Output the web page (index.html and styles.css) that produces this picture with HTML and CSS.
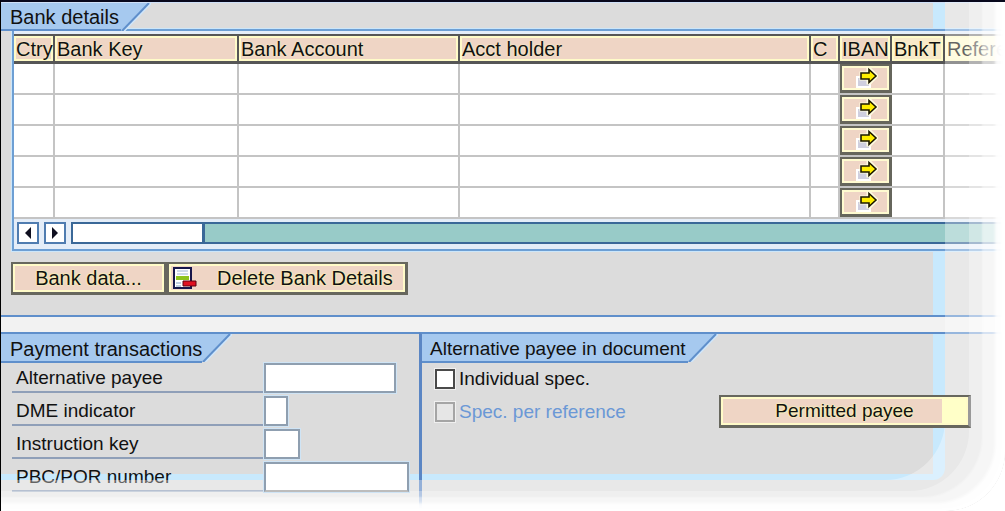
FILE: index.html
```html
<!DOCTYPE html>
<html lang="en">
<head>
<meta charset="utf-8">
<title>Bank details</title>
<link rel="stylesheet" href="styles.css">
</head>
<body>
<svg class="defs" width="0" height="0" aria-hidden="true">
  <symbol id="arrow" viewBox="0 0 24 22">
    <path d="M2 9h15v12H2z" fill="#fff"/>
    <path d="M4 11h11v8H4z" fill="#cfcfdf"/>
    <path d="M7 6h7V2h2l7 7-7 7h-2v-4H7z" fill="#ffffd0" stroke="#fffde0" stroke-width="3"/>
    <path d="M7 6h8V2.500l7 6.500-7 6.500V12H7z" fill="#ffee00" stroke="#1c1800" stroke-width="1.600"/>
  </symbol>
</svg>
<main class="page">
  <section class="panel bank">
    <h2 class="tab"><svg class="tab-edge" viewBox="0 0 30 28" aria-hidden="true"><path class="tab-fill" d="M0 0h28L1 28H0z"/><path class="tab-light" d="M30 0L3 28"/><path class="tab-line" d="M28 0L1 28"/></svg>Bank details</h2>
    <div class="frame">
      <table class="grid">
        <colgroup><col class="w-ctry"><col class="w-key"><col class="w-acct"><col><col class="w-c"><col class="w-iban"><col class="w-bnkt"><col class="w-ref"></colgroup>
        <thead><tr><th>Ctry</th><th>Bank Key</th><th>Bank Account</th><th>Acct holder</th><th>C</th><th>IBAN</th><th class="pale">BnkT</th><th class="pale">Refere</th></tr></thead>
        <tbody>
          <tr><td></td><td></td><td></td><td></td><td></td><td><button class="iban" aria-label="IBAN row 1"><svg><use href="#arrow"/></svg></button></td><td></td><td></td></tr>
          <tr><td></td><td></td><td></td><td></td><td></td><td><button class="iban" aria-label="IBAN row 2"><svg><use href="#arrow"/></svg></button></td><td></td><td></td></tr>
          <tr><td></td><td></td><td></td><td></td><td></td><td><button class="iban" aria-label="IBAN row 3"><svg><use href="#arrow"/></svg></button></td><td></td><td></td></tr>
          <tr><td></td><td></td><td></td><td></td><td></td><td><button class="iban" aria-label="IBAN row 4"><svg><use href="#arrow"/></svg></button></td><td></td><td></td></tr>
          <tr><td></td><td></td><td></td><td></td><td></td><td><button class="iban" aria-label="IBAN row 5"><svg><use href="#arrow"/></svg></button></td><td></td><td></td></tr>
        </tbody>
      </table>
      <div class="scroll">
        <button class="step" aria-label="Scroll left"><svg viewBox="0 0 8 12"><path d="M7 0v12L1 6z"/></svg></button>
        <button class="step" aria-label="Scroll right"><svg viewBox="0 0 8 12"><path d="M1 0v12l6-6z"/></svg></button>
        <div class="track"><div class="thumb"></div></div>
      </div>
    </div>
    <div class="actions">
      <button class="btn data">Bank data...</button>
      <button class="btn delete"><svg viewBox="0 0 26 24" aria-hidden="true"><path d="M2 2h17v20H2z" fill="#fff" stroke="#16164a" stroke-width="2"/><path d="M5 5h11M5 8h11" stroke="#9fb4d4" stroke-width="1"/><path d="M4 10h13v4H4z" fill="#8fc31e"/><path d="M4 17h5M4 20h5" stroke="#7f9ac4" stroke-width="1"/><path d="M11 15h13v5H11z" fill="#e01020" stroke="#5a0010" stroke-width="1"/></svg><span>Delete Bank Details</span></button>
    </div>
  </section>
  <div class="lower">
    <section class="panel payment">
      <h2 class="tab"><svg class="tab-edge" viewBox="0 0 30 28" aria-hidden="true"><path class="tab-fill" d="M0 0h28L1 28H0z"/><path class="tab-light" d="M30 0L3 28"/><path class="tab-line" d="M28 0L1 28"/></svg>Payment transactions</h2>
      <div class="fields">
        <div class="field"><label for="payee">Alternative payee</label><input id="payee" class="in-payee"></div>
        <div class="field"><label for="dme">DME indicator</label><input id="dme" class="in-dme"></div>
        <div class="field"><label for="key">Instruction key</label><input id="key" class="in-key"></div>
        <div class="field last"><label for="pbc">PBC/POR number</label><input id="pbc" class="in-pbc"></div>
      </div>
    </section>
    <section class="panel payee">
      <h2 class="tab"><svg class="tab-edge" viewBox="0 0 30 28" aria-hidden="true"><path class="tab-fill" d="M0 0h28L1 28H0z"/><path class="tab-light" d="M30 0L3 28"/><path class="tab-line" d="M28 0L1 28"/></svg>Alternative payee in document</h2>
      <div class="choices">
        <label class="check"><input type="checkbox">Individual spec.</label>
        <div class="choice-row">
          <label class="check off"><input type="checkbox" disabled>Spec. per reference</label>
          <button class="btn permitted">Permitted payee</button>
        </div>
      </div>
    </section>
  </div>
</main>
</body>
</html>
```
FILE: styles.css
```css
* { box-sizing: border-box; }

body {
  margin: 0;
  background: #fff;
  color: #111;
  font-family: "Liberation Sans", Arial, sans-serif;
  font-size: 20px;
  line-height: 24px;
}

button, input { font: inherit; color: inherit; margin: 0; padding: 0; border-radius: 0; }
.defs { position: absolute; }

.page {
  position: relative;
  isolation: isolate;
  min-height: 100vh;
  overflow: hidden;
  display: flex;
  flex-direction: column;
  background: #dcdcdc;
  border-top: 2px solid #08081c;
  border-left: 1px solid #000;
  border-bottom-right-radius: 60px;
}

/* pale blue rim behind the panels */
.page::before {
  content: "";
  position: absolute;
  z-index: -1;
  inset: 0 60px 31px 0;
  border-right: 12px solid #c8e9fd;
  border-bottom: 6px solid #c8e9fd;
  border-bottom-right-radius: 12px;
}

/* fade towards the right and bottom edges */
.page::after {
  content: "";
  position: absolute;
  z-index: 1;
  inset: -2px 0 0 -1px;
  pointer-events: none;
  border-bottom-right-radius: 60px;
  box-shadow:
    inset -60px -31px 0 rgba(255, 255, 255, .35),
    inset -36px -20px 0 rgba(255, 255, 255, .3),
    inset -23px -14px 2px rgba(255, 255, 255, .45),
    inset -10px -8px 3px rgba(255, 255, 255, .9),
    inset -4px -3px 2px #fff;
}

.panel { display: flex; flex-direction: column; align-items: flex-start; }

.tab {
  position: relative;
  margin: 0;
  padding: 2px 0 1px 9px;
  height: 29px;
  background: #a6c9ef;
  border-bottom: 2px solid #5f8fcb;
  font-size: 20px;
  font-weight: 400;
  line-height: 26px;
}
.tab-edge { position: absolute; left: 100%; top: 0; width: 30px; height: 28px; }
.tab-fill { fill: #a6c9ef; }
.tab-line { fill: none; stroke: #5f8fcb; stroke-width: 2; }
.tab-light { fill: none; stroke: #cfe6fb; stroke-width: 2; }

.bank { border-top: 1px solid #cfe0f8; border-bottom: 2px solid #5f8fcb; padding-bottom: 20px; }
.bank .tab { height: 28px; line-height: 24px; padding-right: 2px; }

.frame {
  align-self: stretch;
  margin-left: 11px;
  margin-top: -2px;
  padding-top: 3px;
  border: 2px solid #6d9fd4;
  border-right: 0;
  background: #e4edf8;
  outline: 1px solid #cbe6fa;
}

.grid { width: 100%; table-layout: fixed; border-collapse: separate; border-spacing: 0; background: #fff; }
.w-ctry { width: 41px; }
.w-key { width: 184px; }
.w-acct { width: 221px; }
.w-c { width: 29px; }
.w-iban { width: 52px; }
.w-bnkt { width: 53px; }
.w-ref { width: 60px; }

.grid th {
  height: 30px;
  padding: 0;
  border: 1px solid #565656;
  border-width: 2px 2px 3px 0;
  background: #efd5c5;
  box-shadow: inset 0 0 0 2px #fffbc8;
  font-weight: 400;
  line-height: 24px;
  text-align: left;
  padding-left: 2px;
  white-space: nowrap;
  overflow: hidden;
  text-shadow: 0 0 2px #ffffc0;
}
.grid th.pale { background: #f8e9c9; }
.grid th:last-child { background: #fffbd0; border-right: 0; }
.grid td {
  height: 31px;
  padding: 0;
  border-right: 2px solid #c4c4c4;
  border-bottom: 2px solid #c4c4c4;
  line-height: 0;
}
.grid td:nth-child(6) { border-right: 0; }

.iban {
  display: flex;
  align-items: center;
  justify-content: center;
  width: 100%;
  height: 29px;
  border: 2px solid #66665c;
  border-width: 2px 3px 3px 2px;
  background: #efd5c5;
  box-shadow: inset 0 0 0 2px #fffbd0;
}
.iban svg { width: 24px; height: 22px; }

.scroll { display: flex; align-items: center; gap: 5px; padding: 3px 0 5px 3px; }
.step {
  display: flex;
  align-items: center;
  justify-content: center;
  width: 22px;
  height: 22px;
  border: 2px solid #4f7cb0;
  background: #fff;
}
.step svg { width: 8px; height: 12px; fill: #101020; }
.track { flex: 1; height: 22px; border: 2px solid #3a6898; border-right: 0; background: #98cbc8; }
.thumb { width: 132px; height: 18px; border-right: 3px solid #3a6898; background: #fff; }

.actions { display: flex; margin: 11px 0 0 10px; }
.btn {
  display: flex;
  align-items: center;
  justify-content: center;
  height: 33px;
  border: 2px solid #67675e;
  border-right-width: 3px;
  border-bottom-width: 3px;
  background: #efd5c5;
  box-shadow: inset 0 0 0 2px #fffbc8;
  text-shadow: 0 0 2px #ffffb0, 0 0 2px #ffffb0;
  white-space: nowrap;
}
.data { width: 156px; }
.delete { width: 241px; justify-content: flex-start; gap: 19px; padding-left: 3px; }
.delete svg { width: 26px; height: 24px; }

.lower {
  flex: 1;
  display: flex;
  border-top: 15px solid #f2f2f2;
}
.lower .panel { border-top: 2px solid #5f8fcb; }
.payment { width: 418px; }
.payee { flex: 1; border-left: 3px solid #5b86c4; }
.payee, .payee .tab { font-size: 19px; }
.payee .tab { padding-left: 8px; padding-right: 2px; }

.fields { display: flex; flex-direction: column; gap: 3px; margin-left: 11px; }
.field { display: flex; height: 30px; }
.field label { width: 252px; padding-left: 4px; border-bottom: 2px solid #8f9fb8; line-height: 30px; font-size: 19px; }
.field input { border: 2px solid #8f9fb0; background: #fff; outline: 1px solid #cfe4f5; }
.field input:focus, .check input:focus-visible { outline: 2px solid #3a6898; }
.field.last input { position: relative; z-index: 2; border-bottom-color: #bcbcbc; }
.in-payee { width: 132px; }
.in-dme { width: 24px; }
.in-key { width: 36px; }
.in-pbc { width: 145px; }

.choices { align-self: stretch; padding: 0 34px 0 13px; }
.check { display: flex; align-items: center; gap: 4px; height: 32px; }
.check input {
  appearance: none;
  width: 20px;
  height: 20px;
  border: 2px solid #4a4a4a;
  background: #fff;
  outline: 1px solid #f0f0f0;
}
.off { color: #6b98d6; }
.off input { border-color: #a5a5a5; background: #e6e6e6; }
.choice-row { display: flex; align-items: center; justify-content: space-between; }
.permitted {
  position: relative;
  z-index: 2;
  width: 252px;
  border-right-color: #999;
  background: linear-gradient(to left, #ffffc8 26px, #efd5c5 26px);
}
```
